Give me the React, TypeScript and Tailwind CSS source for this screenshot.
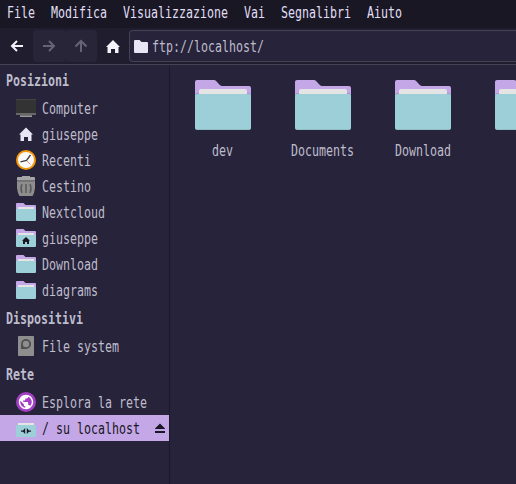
import type { ReactNode } from "react";

const CHAR_WIDTH = 7;

function Label({ children, className = "" }: { children: string; className?: string }) {
  return (
    <span
      className={`block h-5 shrink-0 pt-px font-['DejaVu_Sans_Mono',monospace] text-[15px] leading-5 ${className}`}
      style={{ width: children.length * CHAR_WIDTH }}
    >
      <span className="block w-max origin-left scale-x-[0.7751] whitespace-pre">{children}</span>
    </span>
  );
}

function BigFolder() {
  return (
    <svg width="56" height="50" viewBox="0 0 56 50" className="block shrink-0">
      <path fill="#c4a7e7" d="M2 0h17c3 0 5 6 8 6h27a2 2 0 0 1 2 2v20H0V2a2 2 0 0 1 2-2z" />
      <path fill="#a58dc2" d="M0 15l2-2h52l2 2v2H0z" />
      <path fill="#e4e4e4" d="M6 9h44a2 2 0 0 1 2 2v7H4v-7a2 2 0 0 1 2-2z" />
      <rect y="14" width="56" height="36" rx="2" fill="#84afb8" />
      <rect y="14" width="56" height="35.5" rx="2" fill="#9ccfd8" />
    </svg>
  );
}

function SmallFolder({ children }: { children?: ReactNode }) {
  return (
    <svg width="20" height="20" viewBox="0 0 20 20" className="block shrink-0">
      <path fill="#c4a7e7" d="M1 1h6.5l2 2H19a1 1 0 0 1 1 1v8H0V2a1 1 0 0 1 1-1z" />
      <rect x="2" y="5" width="16" height="4" fill="#e4e4e4" />
      <rect y="7" width="20" height="12" rx="1" fill="#9ccfd8" />
      {children}
    </svg>
  );
}

function HouseIcon() {
  return (
    <svg width="20" height="20" viewBox="0 0 20 20" className="block shrink-0">
      <path fill="#e8e6f5" d="M10 3.5l7 7h-1.5V17H12v-4H8v4H4.5v-6.5H3z" />
    </svg>
  );
}

function ComputerIcon() {
  return (
    <svg width="20" height="20" viewBox="0 0 20 20" className="block shrink-0">
      <path fill="#333" d="M0 1h20v15H0z" />
      <path fill="#424242" d="M0 1h20v1H0z" />
      <path fill="#686868" d="M0 15h20v2H0z" />
      <path fill="#999" d="M4 17h12v2H4z" />
      <path fill="#4e4e4e" d="M4 17h12v.5H4z" />
    </svg>
  );
}

function ClockIcon() {
  return (
    <svg width="20" height="20" viewBox="0 0 20 20" className="block shrink-0">
      <circle cx="10" cy="10" r="10" fill="#f59608" />
      <circle cx="10" cy="10" r="8" fill="#fafafa" />
      <path stroke="#f08a92" strokeWidth="1" d="M10 10l4.500 4.500" />
      <path fill="none" stroke="#3d3d3d" strokeWidth="1.300" d="M4.500 11.800l6-1.300L14.500 5" />
    </svg>
  );
}

function TrashIcon() {
  return (
    <svg width="20" height="20" viewBox="0 0 20 20" className="block shrink-0">
      <path fill="#8e8e8e" d="M1 5h18v7l-1 5-1.500 3h-13L2 17l-1-5z" />
      <path fill="#5c5c5c" d="M1.500 4.500h17v1h-17z" />
      <path fill="#a5a5a5" d="M6 0h8v1h4.500l.5 1v2.500H1V2l.5-1H6z" />
      <path fill="none" stroke="#5a5a5a" strokeWidth="1.500" d="M10 8v9M6 8q-2 4.500 0 9M14 8q2 4.500 0 9" />
    </svg>
  );
}

function DriveIcon() {
  return (
    <svg width="20" height="20" viewBox="0 0 20 20" className="block shrink-0">
      <rect x="2" width="16" height="20" rx=".7" fill="#8e8e8e" />
      <path fill="#4f4f4f" d="M10 3a5 5 0 1 1 0 10H5V8a5 5 0 0 1 5-5z" />
      <circle cx="10" cy="8" r="3.200" fill="#8e8e8e" />
    </svg>
  );
}

function GlobeIcon() {
  return (
    <svg width="20" height="20" viewBox="0 0 20 20" className="block shrink-0">
      <circle cx="10" cy="10" r="10" fill="#a33fc4" />
      <path
        fill="#fff"
        transform="translate(1.36 1.36) scale(.72)"
        d="M12 2C6.480 2 2 6.480 2 12s4.480 10 10 10 10-4.480 10-10S17.520 2 12 2zm-1 17.930c-3.950-.490-7-3.850-7-7.930 0-.620.080-1.210.210-1.790L9 15v1c0 1.100.900 2 2 2v1.930zm6.900-2.540c-.260-.810-1-1.390-1.900-1.390h-1v-3c0-.550-.450-1-1-1H8v-2h2c.550 0 1-.450 1-1V7h2c1.100 0 2-.900 2-2v-.410c2.930 1.190 5 4.060 5 7.410 0 2.080-.800 3.970-2.100 5.390z"
      />
    </svg>
  );
}

function RemoteFolder() {
  return (
    <SmallFolder>
      <path fill="#191724" d="M5 12.500h2L9.200 10v6L7 13.800H5zM15 12.500h-2L10.800 10v6l2.200-2.200h2z" />
    </SmallFolder>
  );
}

function HomeFolder() {
  return (
    <SmallFolder>
      <path fill="#191724" d="M10 9l4 3.700h-1V16h-2v-2H9v2H7v-3.300H6z" />
    </SmallFolder>
  );
}

function Heading({ children }: { children: string }) {
  return (
    <div className="flex h-[30px] items-center pl-1.5">
      <Label className="font-bold">{children}</Label>
    </div>
  );
}

function Place({ icon, name }: { icon: ReactNode; name: string }) {
  return (
    <div className="flex h-[26px] items-center gap-1.5 pl-4">
      {icon}
      <Label>{name}</Label>
    </div>
  );
}

const menus = ["File", "Modifica", "Visualizzazione", "Vai", "Segnalibri", "Aiuto"];

export default function App() {
  return (
    <div className="flex h-[484px] w-[516px] flex-col overflow-hidden bg-[#26233a] text-[#bfbccb]">
      <nav className="flex h-7 shrink-0 gap-4 bg-[#191724] pt-0.5 pl-[7px] text-[#e0def4]">
        {menus.map((m) => (
          <Label key={m}>{m}</Label>
        ))}
      </nav>

      <header className="flex h-[37px] shrink-0 border-b border-[#454254] bg-[#1f1d2e] pt-0.5 pl-px">
        <button className="flex size-8 items-center justify-center">
          <svg width="16" height="16" viewBox="0 0 16 16" fill="none" stroke="#f4f2fb" strokeWidth="2">
            <path d="M14 8H3.500M8 3L3 8l5 5" />
          </svg>
        </button>
        <button className="flex size-8 items-center justify-center rounded-l-sm bg-[#272537]">
          <svg width="16" height="16" viewBox="0 0 16 16" fill="none" stroke="#666474" strokeWidth="2">
            <path d="M2 8h10.500M8 3l5 5-5 5" />
          </svg>
        </button>
        <button className="flex size-8 items-center justify-center rounded-sm bg-[#272537]">
          <svg width="16" height="16" viewBox="0 0 16 16" fill="none" stroke="#666474" strokeWidth="2">
            <path d="M8 14V3.500M2.500 8.500L8 3l5.500 5.500" />
          </svg>
        </button>
        <button className="flex size-8 items-center justify-center">
          <svg width="16" height="16" viewBox="0 0 16 16" fill="#f4f2fb">
            <path d="M8 2l7 7h-1.500v6H10v-4H6v4H2.500V9H1z" />
          </svg>
        </button>
        <div className="flex h-8 flex-1 items-center gap-1 rounded-l-sm border border-r-0 border-[#454254] bg-[#26233a] pl-1">
          <svg width="14" height="14" viewBox="0 0 14 14" fill="#e8e6f5" className="block">
            <path d="M.7 1H5.500l2 2h5.800l.7.700v9.600l-.7.700H.7L0 13.300V1.700z" />
          </svg>
          <Label>ftp://localhost/</Label>
        </div>
      </header>

      <main className="flex min-h-0 flex-1">
        <aside className="w-[170px] shrink-0 border-r border-[#1b1928]">
          <Heading>Posizioni</Heading>
          <Place icon={<ComputerIcon />} name="Computer" />
          <Place icon={<HouseIcon />} name="giuseppe" />
          <Place icon={<ClockIcon />} name="Recenti" />
          <Place icon={<TrashIcon />} name="Cestino" />
          <Place icon={<SmallFolder />} name="Nextcloud" />
          <Place icon={<HomeFolder />} name="giuseppe" />
          <Place icon={<SmallFolder />} name="Download" />
          <Place icon={<SmallFolder />} name="diagrams" />
          <Heading>Dispositivi</Heading>
          <Place icon={<DriveIcon />} name="File system" />
          <Heading>Rete</Heading>
          <Place icon={<GlobeIcon />} name="Esplora la rete" />
          <div className="flex h-[26px] items-center justify-between bg-[#c4a7e7] pr-1 text-[#191724]">
            <Place icon={<RemoteFolder />} name="/ su localhost" />
            <svg width="10" height="10" viewBox="0 0 10 10" fill="#191724" className="block shrink-0">
              <path d="M5 .500l5 5V6H0v-.5zM0 8h10v2H0z" />
            </svg>
          </div>
        </aside>

        <section className="flex min-w-0 flex-1 overflow-hidden pt-[15px] pl-[3px]">
          {["dev", "Documents", "Download", ""].map((name, i) => (
            <div key={i} className="flex w-[100px] shrink-0 flex-col items-center gap-2.5">
              <BigFolder />
              <Label className={name.length % 2 ? "mr-px" : ""}>{name}</Label>
            </div>
          ))}
        </section>
      </main>
    </div>
  );
}
